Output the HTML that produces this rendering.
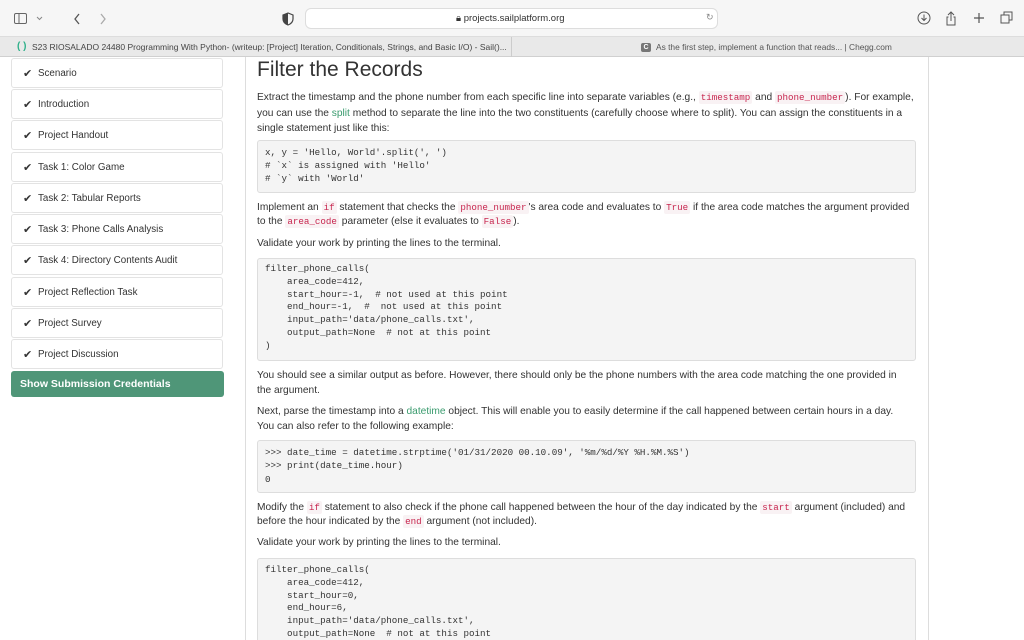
<!DOCTYPE html>
<html><head><meta charset="utf-8"><style>
*{margin:0;padding:0;box-sizing:border-box}
html,body{width:1024px;height:640px;overflow:hidden}
body{background:#fff;font-family:"Liberation Sans",sans-serif;position:relative;color:#333}
.a{position:absolute;white-space:nowrap}
.tb{position:absolute;left:0;top:0;width:1024px;height:37px;background:#f6f6f6;border-bottom:1px solid #ddd}
.tabs{position:absolute;left:0;top:37px;width:1024px;height:20px;background:#e9e9e9;border-bottom:1px solid #d0d0d0}
.side{position:absolute;left:11px;width:212px;height:30px;border:1px solid #e3e3e3;border-radius:3px;font-size:9.8px;color:#333;padding:9px 0 0 26px;background:#fff}
.side:before{content:"\2714";position:absolute;left:11px;top:8px;font-size:11px;color:#333}
.btn{position:absolute;left:11px;top:371px;width:213px;height:26px;background:#4f9678;border-radius:3px;color:#fff;font-size:10.5px;font-weight:bold;padding:7px 0 0 9px}
.t{font-size:10.2px;color:#333;margin-top:2px}
.c{font-family:"Liberation Mono",monospace;font-size:9.2px;color:#333}
.cb{position:absolute;left:257px;width:659px;background:#f4f4f4;border:1px solid #ddd;border-radius:3px}
code{font-family:"Liberation Mono",monospace;font-size:9.2px;color:#c7254e;background:#f9f2f4;padding:1px 2px;border-radius:2px}
.g{color:#3a9b6e}
</style></head><body>
<div class="tb"></div>
<svg class="a" style="left:14px;top:12px" width="100" height="14"><rect x="0.5" y="1.5" width="12" height="10" rx="1.5" fill="none" stroke="#666"/><line x1="5" y1="2" x2="5" y2="11" stroke="#666"/><path d="M23 5l2.5 2.5L28 5" stroke="#888" fill="none"/><path d="M65 2l-4 5 4 5" stroke="#555" stroke-width="1.3" fill="none"/><path d="M87 2l4 5-4 5" stroke="#aaa" stroke-width="1.3" fill="none"/></svg>
<svg class="a" style="left:282px;top:12px" width="12" height="14"><path d="M6 1L1 3v4c0 3 2.5 5 5 6 2.5-1 5-3 5-6V3z" fill="none" stroke="#444" stroke-width="1.2"/><path d="M6 1v12c-2.5-1-5-3-5-6V3z" fill="#444"/></svg>
<div class="a" style="left:305px;top:8px;width:413px;height:21px;background:#fff;border:1px solid #ddd;border-radius:6px"></div>
<div class="a" style="left:456px;top:13px;font-size:9.5px;color:#333">🔒&#xFE0E; projects.sailplatform.org</div>
<div class="a" style="left:706px;top:12px;font-size:9px;color:#888">↻</div>
<svg class="a" style="left:915px;top:10px" width="100" height="18"><circle cx="9" cy="8" r="6" fill="none" stroke="#555"/><path d="M9 4.5v6M6.5 8l2.5 2.5L11.5 8" stroke="#555" fill="none"/><path d="M36 2v9M33 5l3-3 3 3M33.5 7H32v8h8V7h-1.5" stroke="#555" fill="none"/><path d="M64 3v10M59 8h10" stroke="#555" stroke-width="1.2"/><rect x="86" y="5" width="8" height="8" fill="none" stroke="#555"/><path d="M89 5V2h8v8h-3" stroke="#555" fill="none"/></svg>
<div class="tabs"></div>
<div class="a" style="left:17px;top:41px;font-size:10px;color:#2fb08a;font-weight:bold">( )</div>
<div class="a" style="left:32px;top:42px;font-size:8.5px;color:#444;width:476px;overflow:hidden">S23 RIOSALADO 24480 Programming With Python- (writeup: [Project] Iteration, Conditionals, Strings, and Basic I/O) - Sail()...</div>
<div class="a" style="left:511px;top:37px;width:1px;height:20px;background:#ccc"></div>
<div class="a" style="left:641px;top:43px;width:10px;height:9px;background:#777;border-radius:2px;color:#fff;font-size:7px;text-align:center;font-weight:bold;line-height:9px">C</div>
<div class="a" style="left:656px;top:42px;font-size:8.4px;color:#555">As the first step, implement a function that reads... | Chegg.com</div>

<div class="side" style="top:58px">Scenario</div>
<div class="side" style="top:89px">Introduction</div>
<div class="side" style="top:120px">Project Handout</div>
<div class="side" style="top:152px">Task 1: Color Game</div>
<div class="side" style="top:183px">Task 2: Tabular Reports</div>
<div class="side" style="top:214px">Task 3: Phone Calls Analysis</div>
<div class="side" style="top:245px">Task 4: Directory Contents Audit</div>
<div class="side" style="top:277px">Project Reflection Task</div>
<div class="side" style="top:308px">Project Survey</div>
<div class="side" style="top:339px">Project Discussion</div>
<div class="btn">Show Submission Credentials</div>

<div class="a" style="left:245px;top:57px;width:1px;height:583px;background:#ddd"></div>
<div class="a" style="left:928px;top:57px;width:1px;height:583px;background:#ddd"></div>
<div class="a" style="left:257px;top:58px;font-size:21px;color:#333">Filter the Records</div>

<div class="a t" style="left:257px;top:90px">Extract the timestamp and the phone number from each specific line into separate variables (e.g., <code>timestamp</code> and <code>phone_number</code>). For example,</div>
<div class="a t" style="left:257px;top:106px">you can use the <span class="g">split</span> method to separate the line into the two constituents (carefully choose where to split). You can assign the constituents in a</div>
<div class="a t" style="left:257px;top:121px">single statement just like this:</div>

<div class="cb" style="top:140px;height:53px"></div>
<div class="a c" style="left:265px;top:146px;line-height:13px">x, y = 'Hello, World'.split(', ')<br># `x` is assigned with 'Hello'<br># `y` with 'World'</div>

<div class="a t" style="left:257px;top:200px">Implement an <code>if</code> statement that checks the <code>phone_number</code>'s area code and evaluates to <code>True</code> if the area code matches the argument provided</div>
<div class="a t" style="left:257px;top:214px">to the <code>area_code</code> parameter (else it evaluates to <code>False</code>).</div>
<div class="a t" style="left:257px;top:236px">Validate your work by printing the lines to the terminal.</div>

<div class="cb" style="top:258px;height:103px"></div>
<div class="a c" style="left:265px;top:263px;line-height:12.8px;white-space:pre">filter_phone_calls(
    area_code=412,
    start_hour=-1,  # not used at this point
    end_hour=-1,  #  not used at this point
    input_path='data/phone_calls.txt',
    output_path=None  # not at this point
)</div>

<div class="a t" style="left:257px;top:368px">You should see a similar output as before. However, there should only be the phone numbers with the area code matching the one provided in</div>
<div class="a t" style="left:257px;top:383px">the argument.</div>
<div class="a t" style="left:257px;top:404px">Next, parse the timestamp into a <span class="g">datetime</span> object. This will enable you to easily determine if the call happened between certain hours in a day.</div>
<div class="a t" style="left:257px;top:419px">You can also refer to the following example:</div>

<div class="cb" style="top:440px;height:53px"></div>
<div class="a c" style="left:265px;top:446px;line-height:13.3px;white-space:pre">&gt;&gt;&gt; date_time = datetime.strptime('01/31/2020 00.10.09', '%m/%d/%Y %H.%M.%S')
&gt;&gt;&gt; print(date_time.hour)
0</div>

<div class="a t" style="left:257px;top:500px">Modify the <code>if</code> statement to also check if the phone call happened between the hour of the day indicated by the <code>start</code> argument (included) and</div>
<div class="a t" style="left:257px;top:514px">before the hour indicated by the <code>end</code> argument (not included).</div>
<div class="a t" style="left:257px;top:535px">Validate your work by printing the lines to the terminal.</div>

<div class="cb" style="top:558px;height:100px"></div>
<div class="a c" style="left:265px;top:564px;line-height:12.8px;white-space:pre">filter_phone_calls(
    area_code=412,
    start_hour=0,
    end_hour=6,
    input_path='data/phone_calls.txt',
    output_path=None  # not at this point</div>
</body></html>
